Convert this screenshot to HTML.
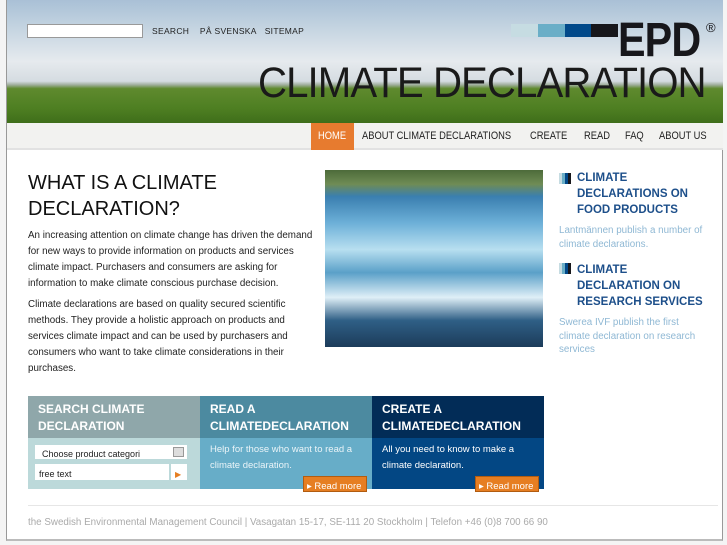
<!DOCTYPE html>
<html><head><meta charset="utf-8"><style>
*{margin:0;padding:0;box-sizing:border-box}
body{width:727px;height:545px;background:#f4f4f4;font-family:"Liberation Sans",sans-serif;position:relative;overflow:hidden}
.page{position:absolute;left:6px;top:0;width:717px;height:541px;background:#fff;border-left:1px solid #999;border-right:1px solid #999;border-bottom:2px solid #bbb}
.hdr{position:absolute;left:0;top:0;width:716px;height:123px;background:linear-gradient(180deg,#a9c0d6 0%,#c7d6e2 25%,#e6eaee 50%,#d5dce1 66%,#9fae9b 69%,#5f8a2e 72%,#4e7f22 88%,#3f6e1a 100%)}
.abs{position:absolute}
.nav{position:absolute;left:0;top:123px;width:716px;height:27px;background:#f2f2f0;border-bottom:2px solid #e2e2e2}
.nav span{position:absolute;top:7px;font-size:11px;color:#222;white-space:nowrap;transform:scaleX(.85);transform-origin:left}
h1{position:absolute;left:21px;top:170px;font-size:20px;font-weight:normal;line-height:26px;color:#111}
p.t{position:absolute;left:21px;font-size:9.8px;line-height:16px;color:#222;white-space:nowrap}
.side h3{font-size:11.5px;color:#1d4f8a;line-height:16px;font-weight:bold}
.side p{font-size:9.8px;color:#8fb8d4;line-height:13.5px;white-space:nowrap}
.box{position:absolute;top:396px;height:93px}
.box .hd{height:42px;padding:5px 10px;color:#fff;font-weight:bold;font-size:12px;line-height:17px}
.box .bd{height:51px;padding:4px 10px;color:#fff;font-size:9.5px;line-height:16px}
.rm{position:absolute;bottom:-3px;right:5px;width:64px;height:16px;background:#e67e22;color:#fff;font-size:9.5px;padding:2px 3px;border:1px solid #b25c10;white-space:nowrap}
</style></head><body>
<div class="page">
<div class="hdr">
 <div class="abs" style="left:20px;top:24px;width:116px;height:14px;background:#fff;border:1px solid #999"></div>
 <div class="abs" style="left:145px;top:26px;font-size:8.5px;color:#222;letter-spacing:.3px">SEARCH&nbsp;&nbsp;&nbsp;&nbsp;PÅ SVENSKA&nbsp;&nbsp;&nbsp;SITEMAP</div>
 <div class="abs" style="left:504px;top:24px;width:27px;height:13px;background:#c6dce2"></div>
 <div class="abs" style="left:531px;top:24px;width:27px;height:13px;background:#6aaec7"></div>
 <div class="abs" style="left:558px;top:24px;width:26px;height:13px;background:#024a8a"></div>
 <div class="abs" style="left:584px;top:24px;width:27px;height:13px;background:#17171b"></div>
 <div class="abs" style="left:611px;top:15px;font-size:48px;font-weight:bold;color:#17171b;letter-spacing:-1px;transform:scaleX(.86);transform-origin:left;line-height:52px">EPD</div>
 <div class="abs" style="left:699px;top:20px;font-size:13px;color:#17171b">®</div>
 <div class="abs" style="left:251px;top:59px;font-size:43px;color:#1a1a1a;letter-spacing:-1px;transform:scaleX(.935);transform-origin:left;white-space:nowrap">CLIMATE DECLARATION</div>
</div>
<div class="nav">
 <div class="abs" style="left:304px;top:0;width:43px;height:27px;background:#e77b2f"></div>
 <span style="left:311px;color:#fff">HOME</span>
 <span style="left:355px">ABOUT CLIMATE DECLARATIONS</span>
 <span style="left:523px">CREATE</span>
 <span style="left:577px">READ</span>
 <span style="left:618px">FAQ</span>
 <span style="left:652px">ABOUT US</span>
</div>
<h1>WHAT IS A CLIMATE<br>DECLARATION?</h1>
<p class="t" style="top:228px">An increasing attention on climate change has driven the demand<br>for new ways to provide information on products and services<br>climate impact. Purchasers and consumers are asking for<br>information to make climate conscious purchase decision.</p>
<p class="t" style="top:297px">Climate declarations are based on quality secured scientific<br>methods. They provide a holistic approach on products and<br>services climate impact and can be used by purchasers and<br>consumers who want to take climate considerations in their<br>purchases.</p>
<div class="abs" style="left:318px;top:170px;width:218px;height:177px;background:linear-gradient(180deg,#4d6b3a 0%,#6f8c55 8%,#3a7fb0 15%,#6db0d8 30%,#b8dff0 45%,#5aa0c8 58%,#dfeff7 72%,#2f5f86 85%,#1c3c5a 100%)"></div>
<div class="side abs" style="left:552px;top:170px;width:160px">
 <div class="abs" style="left:0;top:3px;width:12px;height:11px;background:linear-gradient(90deg,#c6dce2 0 25%,#6aaec7 25% 50%,#024a8a 50% 75%,#17171b 75%)"></div>
 <h3 style="margin-left:18px">CLIMATE<br>DECLARATIONS ON<br>FOOD PRODUCTS</h3>
 <p style="margin-top:6px">Lantmännen publish a number of<br>climate declarations.</p>
 <div class="abs" style="left:0;top:93px;width:12px;height:11px;background:linear-gradient(90deg,#c6dce2 0 25%,#6aaec7 25% 50%,#024a8a 50% 75%,#17171b 75%)"></div>
 <h3 style="margin-left:18px;margin-top:11px">CLIMATE<br>DECLARATION ON<br>RESEARCH SERVICES</h3>
 <p style="margin-top:6px">Swerea IVF publish the first<br>climate declaration on research<br>services</p>
</div>
<div class="box" style="left:21px;width:172px">
 <div class="hd" style="background:#8fa7aa">SEARCH CLIMATE<br>DECLARATION</div>
 <div class="bd" style="background:#bcd9da;position:relative">
  <div class="abs" style="left:7px;top:7px;width:152px;height:14px;background:#fff;font-size:9px;color:#222;padding:1px 7px">Choose product categori</div>
  <div class="abs" style="left:145px;top:9px;width:11px;height:10px;background:#ddd;border:1px solid #999"></div>
  <div class="abs" style="left:7px;top:26px;width:134px;height:16px;background:#fff;font-size:9px;color:#222;padding:2px 4px">free text</div>
  <div class="abs" style="left:143px;top:26px;width:16px;height:16px;background:#fff;color:#e67e22;font-size:8px;padding:3px 4px">▶</div>
 </div>
</div>
<div class="box" style="left:193px;width:172px">
 <div class="hd" style="background:#4c8aa0">READ A<br>CLIMATEDECLARATION</div>
 <div class="bd" style="background:#67adc8;position:relative;color:#eaf4f8">Help for those who want to read a climate declaration.<div class="rm">▸ Read more</div></div>
</div>
<div class="box" style="left:365px;width:172px">
 <div class="hd" style="background:#022c57">CREATE A<br>CLIMATEDECLARATION</div>
 <div class="bd" style="background:#034784;position:relative">All you need to know to make a climate declaration.<div class="rm">▸ Read more</div></div>
</div>
<div class="abs" style="left:21px;top:505px;width:690px;height:1px;background:#e6e6e6"></div>
<div class="abs" style="left:21px;top:517px;font-size:9.8px;color:#aaa;white-space:nowrap">the Swedish Environmental Management Council | Vasagatan 15-17, SE-111 20 Stockholm | Telefon +46 (0)8 700 66 90</div>
</div>
</body></html>
